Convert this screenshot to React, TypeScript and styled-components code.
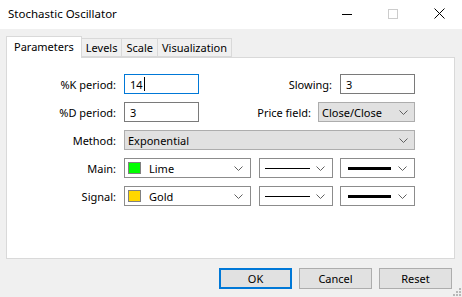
import * as React from 'react';
import styled, { createGlobalStyle } from 'styled-components';

const GlobalStyle = createGlobalStyle`
  html, body {
    margin: 0;
    padding: 0;
    background: #f0f0f0;
  }
  body {
    font-family: "Noto Sans", "Open Sans", sans-serif;
    font-size: 11px;
    color: #000;
  }
`;

function Chevron() {
  return (
    <svg width="9" height="5" viewBox="0 0 9 5">
      <path d="M0.5 0.5 L4.5 4.5 L8.5 0.5" fill="none" stroke="#606060" strokeWidth="1" />
    </svg>
  );
}

function Select({ width, children }: { width?: number; children: React.ReactNode }) {
  return (
    <SelectBox $width={width}>
      <SelectValue>{children}</SelectValue>
      <Chevron />
    </SelectBox>
  );
}

function PickBox({ width, children }: { width: number; children: React.ReactNode }) {
  return (
    <PickWrap $width={width}>
      <SelectValue>{children}</SelectValue>
      <Chevron />
    </PickWrap>
  );
}

function App() {
  return (
    <Window>
      <GlobalStyle />
      <TitleBar>
        <Title>Stochastic Oscillator</Title>
        <Caption>
          <CaptionButton>
            <svg width="10" height="10" viewBox="0 0 10 10">
              <path d="M0 5.5 H10" stroke="#000" strokeWidth="1" />
            </svg>
          </CaptionButton>
          <CaptionButton>
            <svg width="10" height="10" viewBox="0 0 10 10">
              <rect x="0.5" y="0.5" width="9" height="9" fill="none" stroke="#cccccc" strokeWidth="1" />
            </svg>
          </CaptionButton>
          <CaptionButton>
            <svg width="11" height="11" viewBox="0 0 11 11">
              <path d="M0.5 0.5 L10.5 10.5 M10.5 0.5 L0.5 10.5" stroke="#000" strokeWidth="1" />
            </svg>
          </CaptionButton>
        </Caption>
      </TitleBar>

      <Body>
        <Tabs>
          <Tab $active>Parameters</Tab>
          <Tab>Levels</Tab>
          <Tab>Scale</Tab>
          <Tab>Visualization</Tab>
        </Tabs>
        <Panel>
          <Row>
            <Label>%K period:</Label>
            <TextInput $focused>
              14<Caret />
            </TextInput>
            <Spacer />
            <SideLabel>Slowing:</SideLabel>
            <TextInput>3</TextInput>
          </Row>
          <Row>
            <Label>%D period:</Label>
            <TextInput>3</TextInput>
            <Spacer />
            <SideLabel $gap={7}>Price field:</SideLabel>
            <Select width={97}>Close/Close</Select>
          </Row>
          <Row>
            <Label>Method:</Label>
            <Select>Exponential</Select>
          </Row>
          <Row>
            <Label>Main:</Label>
            <PickBox width={127}>
              <Swatch $color="#00ff00" />
              Lime
            </PickBox>
            <PickBox width={75}>
              <LineSample $thickness={1} $width={45} $offset={5} />
            </PickBox>
            <PickBox width={75}>
              <LineSample $thickness={3} $width={43} $offset={7} />
            </PickBox>
          </Row>
          <Row>
            <Label>Signal:</Label>
            <PickBox width={127}>
              <Swatch $color="#ffd700" />
              Gold
            </PickBox>
            <PickBox width={75}>
              <LineSample $thickness={1} $width={45} $offset={5} />
            </PickBox>
            <PickBox width={75}>
              <LineSample $thickness={3} $width={43} $offset={7} />
            </PickBox>
          </Row>
        </Panel>
        <Footer>
          <Button $default>OK</Button>
          <Button>Cancel</Button>
          <Button>Reset</Button>
        </Footer>
      </Body>
      <Grip>
        <svg width="8" height="8" viewBox="0 0 8 8">
          {[
            [6, 0],
            [6, 3],
            [3, 3],
            [6, 6],
            [3, 6],
            [0, 6],
          ].map(([x, y]) => (
            <rect key={`${x}-${y}`} x={x} y={y} width="2" height="2" fill="#b8b8b8" />
          ))}
        </svg>
      </Grip>
    </Window>
  );
}

const Window = styled.div`
  position: relative;
  width: 462px;
  height: 297px;
  background: #f0f0f0;
  display: flex;
  flex-direction: column;
  overflow: hidden;
`;

const TitleBar = styled.div`
  height: 29px;
  background: #ffffff;
  display: flex;
  align-items: center;
`;

const Title = styled.div`
  flex: 1;
  padding-left: 8px;
  font-size: 11.5px;
  margin-top: -2px;
`;

const Caption = styled.div`
  display: flex;
  height: 100%;
`;

const CaptionButton = styled.div`
  width: 46px;
  height: 100%;
  display: flex;
  align-items: center;
  justify-content: center;
  margin-top: -1px;
`;

const Body = styled.div`
  display: flex;
  flex-direction: column;
  padding: 7px 0 0 6px;
`;

const Tabs = styled.div`
  display: flex;
  align-items: flex-end;
  height: 21px;
  position: relative;
  z-index: 1;
`;

const Tab = styled.div<{ $active?: boolean }>`
  box-sizing: border-box;
  height: ${(p) => (p.$active ? '22px' : '19px')};
  margin-bottom: ${(p) => (p.$active ? '-1px' : '0')};
  padding: 0 ${(p) => (p.$active ? '7px' : '4px')};
  padding-bottom: ${(p) => (p.$active ? '3px' : '0')};
  border: 1px solid #d9d9d9;
  border-bottom: ${(p) => (p.$active ? 'none' : '1px solid #d9d9d9')};
  border-left: ${(p) => (p.$active ? '1px solid #d9d9d9' : 'none')};
  background: ${(p) => (p.$active ? '#ffffff' : '#f0f0f0')};
  display: flex;
  align-items: center;
  white-space: nowrap;
`;

const Panel = styled.div`
  box-sizing: border-box;
  width: 449px;
  height: 202px;
  border: 1px solid #d9d9d9;
  background: #ffffff;
  padding: 16px 0 0 0;
  display: flex;
  flex-direction: column;
  gap: 8px;
`;

const Row = styled.div`
  display: flex;
  align-items: center;
  height: 20px;
  width: 408px;
`;

const Label = styled.div`
  width: 109px;
  flex-shrink: 0;
  text-align: right;
  margin-right: 8px;
  white-space: nowrap;
`;

const SideLabel = styled.div<{ $gap?: number }>`
  margin-right: ${(p) => p.$gap ?? 8}px;
  white-space: nowrap;
`;

const Spacer = styled.div`
  flex: 1;
`;

const TextInput = styled.div<{ $focused?: boolean }>`
  box-sizing: border-box;
  width: 75px;
  height: 20px;
  border: 1px solid ${(p) => (p.$focused ? '#0078d7' : '#7a7a7a')};
  background: #ffffff;
  padding-left: 5px;
  display: flex;
  align-items: center;
`;

const Caret = styled.span`
  display: inline-block;
  width: 1px;
  height: 14px;
  background: #000;
  margin-left: 1px;
`;

const SelectBox = styled.div<{ $width?: number }>`
  box-sizing: border-box;
  ${(p) => (p.$width ? `width: ${p.$width}px;` : 'flex: 1;')}
  height: 20px;
  border: 1px solid #adadad;
  background: #e1e1e1;
  display: flex;
  align-items: center;
  padding: 0 6px 0 3px;
`;

const PickWrap = styled.div<{ $width: number }>`
  box-sizing: border-box;
  width: ${(p) => p.$width}px;
  height: 20px;
  border: 1px solid #8c8c8c;
  background: #ffffff;
  display: flex;
  align-items: center;
  padding: 0 7px 0 3px;
  margin-right: 8px;

  &:last-child {
    margin-right: 0;
  }

  & + & + & {
    margin-left: -1px;
  }
`;

const SelectValue = styled.div`
  flex: 1;
  display: flex;
  align-items: center;
  white-space: nowrap;
`;

const Swatch = styled.span<{ $color: string }>`
  box-sizing: border-box;
  width: 13px;
  height: 12px;
  border: 1px solid #808080;
  background: ${(p) => p.$color};
  margin-right: 8px;
`;

const LineSample = styled.span<{ $thickness: number; $width: number; $offset: number }>`
  width: ${(p) => p.$width}px;
  height: ${(p) => p.$thickness}px;
  background: #000;
  margin-left: ${(p) => p.$offset - 3}px;
`;

const Footer = styled.div`
  display: flex;
  justify-content: flex-end;
  gap: 7px;
  padding: 9px 10px 0 0;
`;

const Button = styled.div<{ $default?: boolean }>`
  box-sizing: border-box;
  width: 73px;
  height: 21px;
  background: #e1e1e1;
  border: ${(p) => (p.$default ? '2px solid #0078d7' : '1px solid #adadad')};
  display: flex;
  align-items: center;
  justify-content: center;
`;

const Grip = styled.div`
  position: absolute;
  right: 1px;
  bottom: 1px;
  width: 8px;
  height: 8px;
  display: flex;
`;

export default App;
